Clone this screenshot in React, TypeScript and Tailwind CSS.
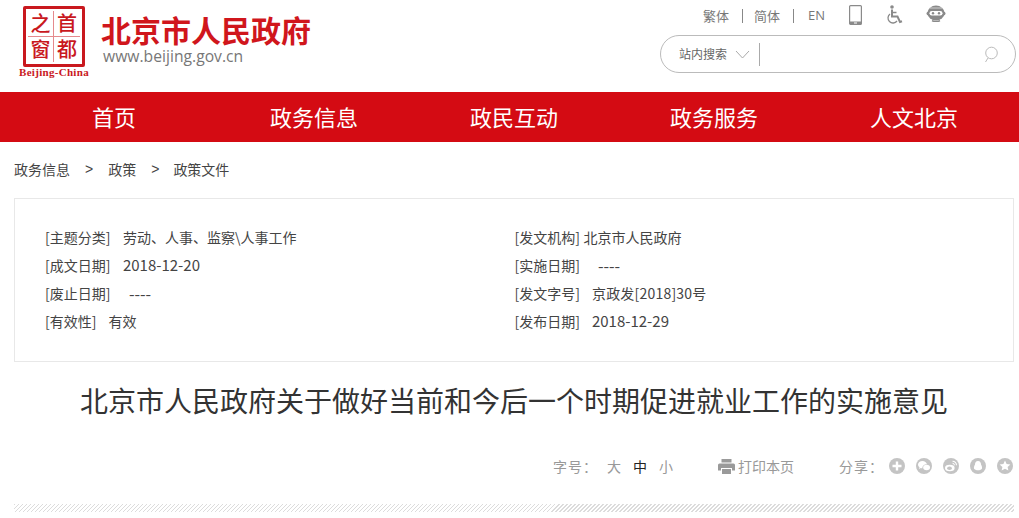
import React from "react";

const cjk = "font-['Noto_Sans_CJK_SC',sans-serif]";

function Logo() {
  return (
    <div className="flex flex-col items-center w-[72px]">
      <div className="w-[62px] h-[61px] border-[3px] border-[#c9181e] rounded-[2px] grid grid-cols-2 grid-rows-2 p-[2px] text-[#c9181e] text-[20px] leading-[20px] font-medium">
        <span className="flex items-center justify-center border-r border-b border-[#e58a8d]">之</span>
        <span className="flex items-center justify-center border-b border-[#e58a8d]">首</span>
        <span className="flex items-center justify-center border-r border-[#e58a8d]">窗</span>
        <span className="flex items-center justify-center">都</span>
      </div>
      <div className="text-[11px] leading-[11px] font-bold tracking-[0.3px] text-[#c9181e] font-['Liberation_Serif',serif] whitespace-nowrap">Beijing-China</div>
    </div>
  );
}

function Phone() {
  return (
    <svg className="block" width="13" height="20" viewBox="0 0 13 20" fill="none">
      <rect x="0.6" y="0.6" width="11.8" height="18.8" rx="1" stroke="#8a8a8a" strokeWidth="1.2" />
      <rect x="1" y="16.500" width="11" height="3" fill="#8a8a8a" />
      <rect x="5" y="17.500" width="3" height="1" fill="#fff" />
    </svg>
  );
}
function Wheelchair() {
  return (
    <svg className="block" width="17" height="20" viewBox="0 0 17 20" fill="none">
      <circle cx="6" cy="2" r="1.8" fill="#8a8a8a" />
      <path d="M6 4.5 V11.500 H11.500 L14 17 L16 16.300" stroke="#8a8a8a" strokeWidth="2" />
      <path d="M6 7.500 H10.500" stroke="#8a8a8a" strokeWidth="1.5" />
      <path d="M4 9 A5 5 0 1 0 11 16" stroke="#8a8a8a" strokeWidth="1.3" />
    </svg>
  );
}
function Robot() {
  return (
    <svg className="block" width="20" height="17" viewBox="0 0 20 17" fill="none">
      <ellipse cx="10" cy="8" rx="8.500" ry="7.500" fill="#8a8a8a" />
      <rect x="0.500" y="6.500" width="19" height="4" rx="2" fill="#8a8a8a" />
      <rect x="3.500" y="6" width="13" height="4.500" rx="2.200" fill="#fff" />
      <circle cx="7" cy="8.200" r="1.200" fill="#8a8a8a" />
      <circle cx="13" cy="8.200" r="1.200" fill="#8a8a8a" />
      <path d="M4 3 H16" stroke="#fff" strokeWidth="0.600" />
      <path d="M6 15.700 C8 16.800 12 16.800 14 15.700" stroke="#8a8a8a" strokeWidth="1.400" />
    </svg>
  );
}
function Printer() {
  return (
    <svg className="block" width="17" height="15" viewBox="0 0 17 15" fill="#9a9a9a">
      <rect x="3.500" y="0" width="10" height="3.500" />
      <path d="M1.500 4.500 H15.500 A1.500 1.500 0 0 1 17 6 V11.500 H14 V9 H3 V11.500 H0 V6 A1.500 1.500 0 0 1 1.500 4.500Z" />
      <rect x="4" y="10" width="9" height="5" />
    </svg>
  );
}

function ShareIcon({ children }: { children: React.ReactNode }) {
  return (
    <span className="w-4 h-4 rounded-full bg-[#c4c4c4] flex items-center justify-center">
      <svg className="block" width="16" height="16" viewBox="0 0 16 16" fill="#fff">{children}</svg>
    </span>
  );
}

function Row({ label, value, gap }: { label: string; value: string; gap: string }) {
  return (
    <div className="h-[28px] flex items-center whitespace-nowrap">
      <span className="pb-[2px]">{label}</span>
      <span className={`pb-[2px] ${gap}`}>{value}</span>
    </div>
  );
}

export default function App() {
  const nav = ["首页", "政务信息", "政民互动", "政务服务", "人文北京"];
  return (
    <div className={`w-[1019px] h-[518px] overflow-hidden bg-white text-[#555] ${cjk}`}>
      <header className="h-[92px] flex justify-between">
        <div className="flex pl-[18px] pt-[6px]">
          <Logo />
          <div className="ml-[11px] pt-[8px]">
            <div className="text-[30px] leading-[30px] font-bold text-[#d0161c]">北京市人民政府</div>
            <div className="ml-[2px] mt-[2px] text-[15.7px] leading-[20px] text-[#777] font-['Open_Sans',sans-serif]">www.beijing.gov.cn</div>
          </div>
        </div>
        <div className="w-[356px] mr-[3px] flex flex-col">
          <div className="h-[35px] flex items-start pt-[6px] text-[13px] text-[#777]">
            <div className="ml-[43px] flex items-center h-[20px]">
              <span>繁体</span>
              <span className="w-px h-[14px] bg-[#888] ml-[13px] mr-[11px]" />
              <span>简体</span>
              <span className="w-px h-[14px] bg-[#888] ml-[13px] mr-[14px]" />
              <span className="font-['Open_Sans',sans-serif]">EN</span>
              <span className="ml-[24px] mt-[-2px]"><Phone /></span>
              <span className="ml-[24px] mt-[-2px]"><Wheelchair /></span>
              <span className="ml-[23px] mt-[-5px]"><Robot /></span>
            </div>
          </div>
          <div className="h-[38px] rounded-[19px] border border-[#bbb] flex items-center pl-[18px] pr-[16px] text-[12px] text-[#666]">
            <span>站内搜索</span>
            <svg className="ml-[8px]" width="15" height="9" viewBox="0 0 15 9" fill="none"><path d="M1 1 L7.500 8 L14 1" stroke="#aaa" /></svg>
            <span className="ml-[9px] w-px h-[23px] bg-[#aaa]" />
            <svg className="ml-auto" width="16" height="17" viewBox="0 0 16 17" fill="none">
              <circle cx="8.500" cy="7" r="5.800" stroke="#bbb" />
              <path d="M5 12 L2.500 16" stroke="#bbb" />
            </svg>
          </div>
        </div>
      </header>

      <nav className="h-[50px] bg-[#d40b13] pl-[14px] flex text-white text-[22px]">
        {nav.map((n) => (
          <a key={n} className="w-[200px] flex items-center justify-center pb-[2px]">{n}</a>
        ))}
      </nav>

      <div className="h-[56px] pl-[14px] pb-[2px] flex items-center text-[14px] text-[#444]">
        <span>政务信息</span>
        <span className="mx-[15px] font-['Liberation_Sans',sans-serif]">&gt;</span>
        <span>政策</span>
        <span className="ml-[15px] mr-[14px] font-['Liberation_Sans',sans-serif]">&gt;</span>
        <span>政策文件</span>
      </div>

      <section className="ml-[14px] w-[1000px] h-[164px] border border-[#e8e8e8] pl-[30px] pt-[25px] grid grid-cols-[469.5px_1fr] content-start text-[14px] text-[#444]">
        <div>
          <Row label="[主题分类]" value="劳动、人事、监察\人事工作" gap="ml-[12.500px]" />
          <Row label="[成文日期]" value="2018-12-20" gap="ml-[12.500px] text-[15px]" />
          <Row label="[废止日期]" value="----" gap="ml-[18.500px] text-[16px]" />
          <Row label="[有效性]" value="有效" gap="ml-[12px]" />
        </div>
        <div>
          <Row label="[发文机构]" value="北京市人民政府" gap="ml-[3.500px]" />
          <Row label="[实施日期]" value="----" gap="ml-[18px] text-[16px]" />
          <Row label="[发文字号]" value="京政发[2018]30号" gap="ml-[12px] tracking-[0.2px]" />
          <Row label="[发布日期]" value="2018-12-29" gap="ml-[12px] text-[15px]" />
        </div>
      </section>

      <h1 className="mt-[17px] h-[42px] text-center text-[28px] leading-[42px] text-[#333] font-normal pl-[9px]">
        北京市人民政府关于做好当前和今后一个时期促进就业工作的实施意见
      </h1>

      <div className="mt-[35px] h-[20px] flex items-center text-[14px] text-[#999]">
        <span className="ml-[553px] tracking-[1px]">字号：</span>
        <span className="ml-[9px]">大</span>
        <span className="ml-[12px] text-[#222]">中</span>
        <span className="ml-[12px]">小</span>
        <span className="ml-[45px]"><Printer /></span>
        <span className="ml-[3px]">打印本页</span>
        <span className="ml-[45px] tracking-[1px]">分享：</span>
        <span className="ml-[5px] flex gap-[11px]">
          <ShareIcon><path d="M6.800 3.500h2.400V6.800h3.300v2.400H9.200v3.300H6.800V9.200H3.500V6.800h3.300z" /></ShareIcon>
          <ShareIcon>
            <path d="M6.500 3C4 3 2 4.500 2 6.600c0 1.100.6 2 1.500 2.700L3 11l1.800-1c.5.100 1 .2 1.500.2C6.200 8 8 6.200 11 6.300 10.500 4.400 8.700 3 6.500 3z" />
            <ellipse cx="10.600" cy="9.500" rx="3.400" ry="2.700" />
          </ShareIcon>
          <ShareIcon>
            <ellipse cx="6.800" cy="10" rx="4.800" ry="3.300" />
            <ellipse cx="6.500" cy="10.200" rx="2.400" ry="1.700" fill="#c4c4c4" />
            <path d="M9.500 3.200 a4 4 0 0 1 4 4" stroke="#fff" fill="none" strokeWidth="1.100" />
            <path d="M9.500 5.300 a2 2 0 0 1 2 2" stroke="#fff" fill="none" strokeWidth="0.900" />
          </ShareIcon>
          <ShareIcon><path d="M8 3c2.300 0 3 2 3 3.600 1 1.500 1.400 3.400.8 4.400-1 .9-2.400 1.200-3.800 1.200s-2.800-.3-3.800-1.200c-.6-1-.2-2.900.8-4.400C5 5 5.700 3 8 3z" /></ShareIcon>
          <ShareIcon><path d="M8 2.500l1.600 3.500 3.800.4-2.800 2.500.8 3.700L8 10.800l-3.400 1.800.8-3.700L2.600 6.400l3.800-.4z" /></ShareIcon>
        </span>
      </div>

      <div className="mt-[28px] ml-[14px] w-[1000px] h-[8px] bg-[repeating-linear-gradient(135deg,#dcdcdc_0,#dcdcdc_1.2px,#ffffff_1.2px,#ffffff_2.83px)]" />
    </div>
  );
}
